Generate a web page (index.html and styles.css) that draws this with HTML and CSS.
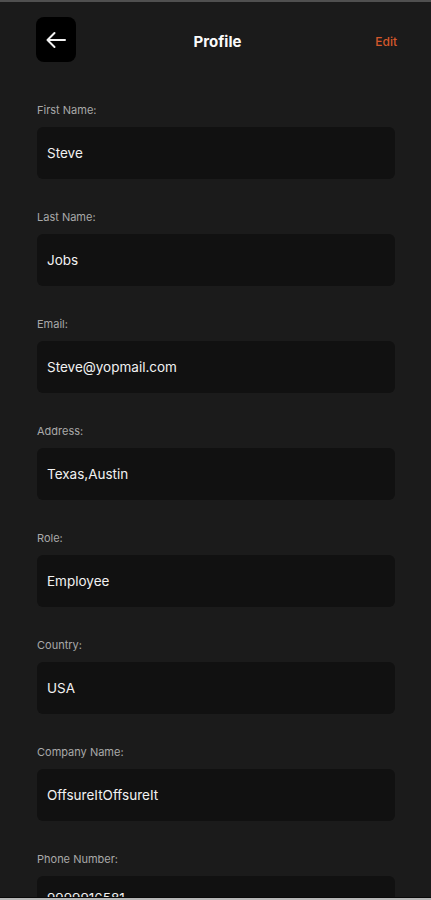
FILE: index.html
```html
<!DOCTYPE html>
<html>
<head>
<meta charset="utf-8">
<link rel="stylesheet" href="styles.css">
</head>
<body>
<div class="topline"></div>
<header class="header">
  <button class="back" aria-label="Back">
    <svg width="24" height="24" viewBox="0 0 24 24" fill="none" stroke="#f2f2f2" stroke-width="2" stroke-linecap="round" stroke-linejoin="round"><path d="M21 12H3.5M10.5 5L3.5 12l7 7"/></svg>
  </button>
  <h1 class="title">Profile</h1>
  <a class="edit">Edit</a>
</header>
<main class="form">
  <div class="field"><div class="label">First Name:</div><div class="value">Steve</div></div>
  <div class="field"><div class="label">Last Name:</div><div class="value">Jobs</div></div>
  <div class="field"><div class="label">Email:</div><div class="value">Steve@yopmail.com</div></div>
  <div class="field"><div class="label">Address:</div><div class="value">Texas,Austin</div></div>
  <div class="field"><div class="label">Role:</div><div class="value">Employee</div></div>
  <div class="field"><div class="label">Country:</div><div class="value">USA</div></div>
  <div class="field"><div class="label">Company Name:</div><div class="value">OffsureItOffsureIt</div></div>
  <div class="field"><div class="label">Phone Number:</div><div class="value phone">9999916581</div></div>
</main>
<div class="bottomline"></div>
</body>
</html>
```
FILE: styles.css
```css
html, body {
  margin: 0;
  padding: 0;
  background: #1b1b1b;
  font-family: "Inter", "Noto Sans", sans-serif;
  color: #f0f0f0;
}
.topline {
  height: 2px;
  background: #505050;
}
.header {
  display: grid;
  grid-template-columns: 1fr auto 1fr;
  align-items: center;
  padding: 15px 34px 0 36px;
  height: 45px;
}
.back {
  width: 40px;
  height: 45px;
  border: 0;
  border-radius: 8px;
  background: #000;
  display: flex;
  align-items: center;
  justify-content: center;
  padding: 0;
}
.title {
  margin: 4px 0 0 0;
  font-size: 15px;
  font-weight: 700;
  color: #fafafa;
  position: relative;
  left: 1px;
}
.edit {
  justify-self: end;
  margin-top: 3px;
  font-size: 12px;
  color: #d4582b;
  font-weight: 500;
}
.form {
  display: flex;
  flex-direction: column;
  gap: 30px;
  padding: 40px 36px 0 37px;
}
.field {
  display: flex;
  flex-direction: column;
  gap: 9px;
}
.label {
  font-size: 11px;
  line-height: 16px;
  color: #a9a9a9;
}
.value {
  height: 52px;
  background: #111111;
  border-radius: 6px;
  display: flex;
  align-items: center;
  padding-left: 10px;
  font-size: 13.5px;
  color: #f2f2f2;
}
.value.phone {
  align-items: flex-start;
  padding-top: 14px;
  height: 38px;
}
.bottomline {
  position: fixed;
  left: 0;
  right: 0;
  bottom: 0;
  height: 3px;
  background: linear-gradient(#0a0a0a 0 1px, #b8b8b8 1px);
}
```
